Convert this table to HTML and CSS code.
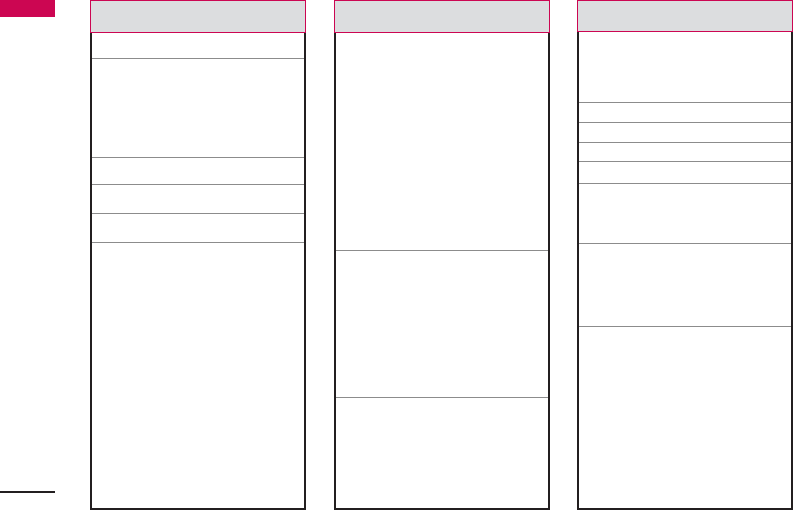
FILE: index.html
```html
<!DOCTYPE html>
<html>

	<head>
		<meta charset="UTF-8">
		<title></title>
		<link rel="stylesheet" href="styles.css">
	</head>

	<body>
		<div class="page">
			<div class="margin">
				<div class="tab"></div>
				<div class="foot-rule"></div>
			</div>

			<div class="col col1">
				<div class="head"></div>
				<div class="tbody">
					<div class="row r1"></div>
					<div class="row r2"></div>
					<div class="row r3"></div>
					<div class="row r4"></div>
					<div class="row r5"></div>
					<div class="row last"></div>
				</div>
			</div>

			<div class="col col2">
				<div class="head"></div>
				<div class="tbody">
					<div class="row r1"></div>
					<div class="row r2"></div>
					<div class="row last"></div>
				</div>
			</div>

			<div class="col col3">
				<div class="head"></div>
				<div class="tbody">
					<div class="row r1"></div>
					<div class="row r2"></div>
					<div class="row r3"></div>
					<div class="row r4"></div>
					<div class="row r5"></div>
					<div class="row r6"></div>
					<div class="row r7"></div>
					<div class="row last"></div>
				</div>
			</div>
		</div>
	</body>

</html>
```

FILE: styles.css
```css
html,
body {
	margin: 0;
	padding: 0;
	background: #fff;
	font-family: "Liberation Sans", Arial, sans-serif;
}

.page {
	display: flex;
	height: 510px;
	width: 793px;
	overflow: hidden;
}

/* 左侧页边：顶部色块 + 底部短线 */
.margin {
	width: 55px;
	display: flex;
	flex-direction: column;
}

.tab {
	height: 17px;
	background-color: #cc0652;
}

.foot-rule {
	margin-top: auto;
	margin-bottom: 17px;
	height: 2px;
	background-color: #231f20;
}

.col {
	width: 216px;
	display: flex;
	flex-direction: column;
}

.col1 {
	margin-left: 35px;
}

.col2 {
	margin-left: 28px;
}

.col3 {
	margin-left: 27px;
}

.head {
	height: 33px;
	box-sizing: border-box;
	border: 1.5px solid #cc0652;
	background-color: #dcdddf;
}

.col3 .head {
	height: 32px;
}

.tbody {
	flex: 1;
	display: flex;
	flex-direction: column;
	border: 2px solid #231f20;
	border-top: 0;
}

.row {
	border-bottom: 1px solid #8c8c8c;
}

.row.last {
	flex: 1;
	border-bottom: 0;
}

/* 第一栏 */
.col1 .r1 { height: 25px; }
.col1 .r2 { height: 98px; }
.col1 .r3 { height: 26px; }
.col1 .r4 { height: 28px; }
.col1 .r5 { height: 28px; }

/* 第二栏 */
.col2 .r1 { height: 217px; }
.col2 .r2 { height: 146px; }

/* 第三栏 */
.col3 .r1 { height: 70px; }
.col3 .r2 { height: 19px; }
.col3 .r3 { height: 19px; }
.col3 .r4 { height: 18px; }
.col3 .r5 { height: 21px; }
.col3 .r6 { height: 59px; }
.col3 .r7 { height: 82px; }
```
